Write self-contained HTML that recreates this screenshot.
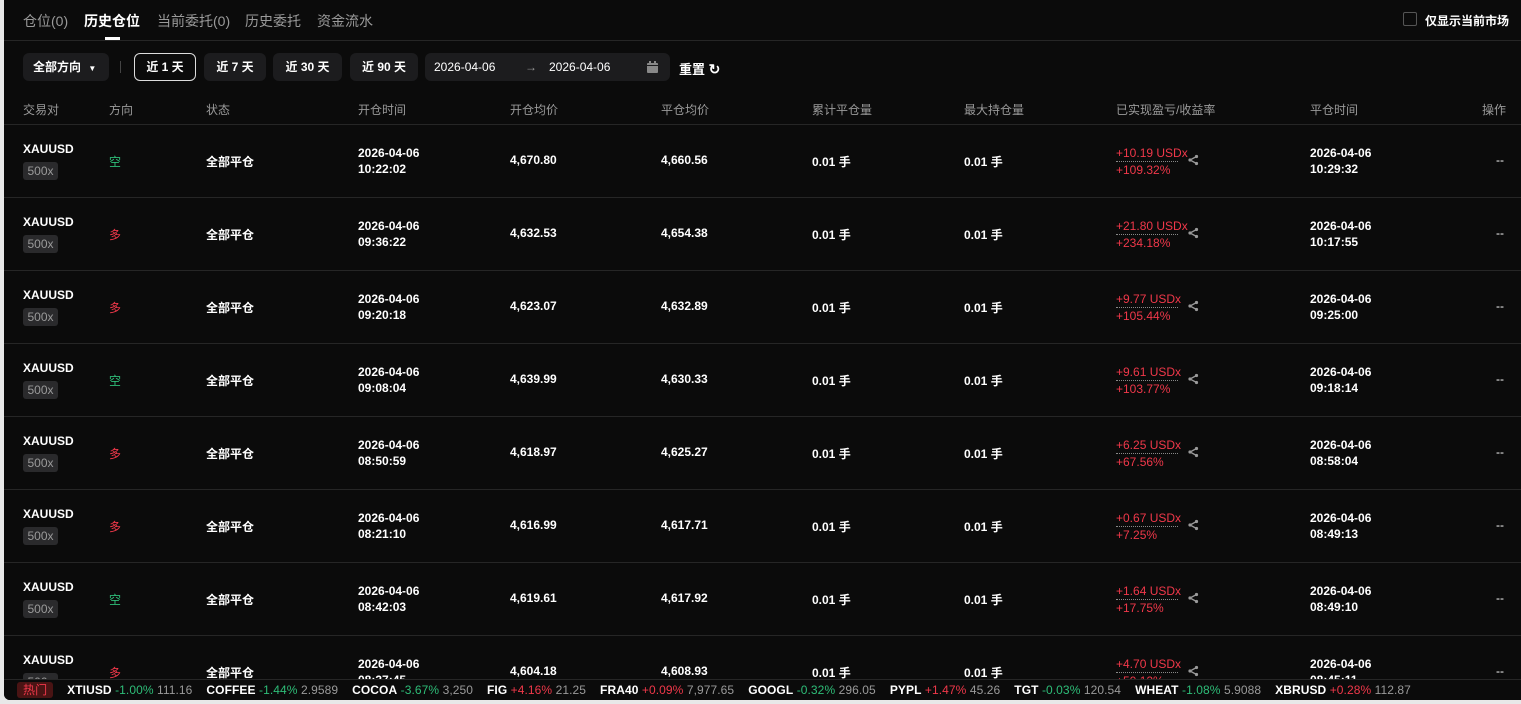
<!DOCTYPE html><html><head><meta charset="utf-8"><style>
*{margin:0;padding:0;box-sizing:border-box}
body{width:1521px;height:704px;background:#e8e8e8;font-family:"Liberation Sans","Noto Sans CJK SC",sans-serif;color:#fff;overflow:hidden;position:relative}
#app{position:absolute;left:4px;top:0;width:1517px;height:700px;background:#0b0b0b;overflow:hidden;border-bottom-left-radius:6px}
.a{position:absolute;white-space:nowrap}
.tab{top:11px;font-size:14px;color:#9a9a9a}
.btn{position:absolute;top:53px;height:28px;border-radius:6px;background:#1c1c1e;font-size:12px;font-weight:bold;line-height:28px;text-align:center;color:#fff}
.hd{top:101px;font-size:12px;color:#9a9a9a}
.row{position:absolute;left:0;width:1517px;height:73px;border-bottom:1px solid #262626}
.row .a{font-size:12px;font-weight:bold}
.sym{left:19px;top:17px}
.lev{left:19px;top:37px;width:35px;height:18px;background:#2a2a2c;border-radius:3px;color:#9a9a9a!important;font-weight:normal!important;text-align:center;line-height:18px;font-size:12px}
.dir{left:105px;top:28px;font-weight:normal!important}
.g{color:#2ebd78}.r{color:#f0384a}
.st{left:202px;top:28px}
.t1{left:354px;top:20px;line-height:16px}
.p1{left:506px;top:28px}.p2{left:657px;top:28px}
.q1{left:808px;top:28px}.q2{left:960px;top:28px}
.pl{left:1112px;top:20px;line-height:16px;color:#f0384a;font-weight:normal!important}
.pl span{display:block;border-bottom:1px dotted #888;width:62px}
.sh{left:1183px;top:29px;width:12px;height:12px}
.t2{left:1306px;top:20px;line-height:16px}
.op{left:1492px;top:28px;font-weight:normal!important}
#tk{position:absolute;left:0;top:679px;width:1517px;height:21px;background:#0b0b0b;border-top:1px solid #262626;font-size:12px;line-height:20px;letter-spacing:0.08px}
#tk b{font-weight:bold;color:#fff;margin-left:14px}
#tk i{font-style:normal}
#tk .v{color:#9a9a9a}
</style></head><body><div id="app">
<div class="a tab" style="left:19px">仓位(0)</div>
<div class="a tab" style="left:80px;color:#fff;font-weight:bold">历史仓位</div>
<div class="a" style="left:101px;top:37px;width:15px;height:3px;background:#fff"></div>
<div class="a tab" style="left:153px">当前委托(0)</div>
<div class="a tab" style="left:241px">历史委托</div>
<div class="a tab" style="left:313px">资金流水</div>
<div class="a" style="left:1399px;top:12px;width:14px;height:14px;border:1px solid #555;border-radius:2px"></div>
<div class="a" style="left:1421px;top:12px;font-size:12px;font-weight:bold">仅显示当前市场</div>
<div class="a" style="left:0;top:40px;width:1517px;height:1px;background:#262626"></div>
<div class="btn" style="left:19px;width:86px;text-align:left;padding-left:10px">全部方向 <span style="font-size:8px;margin-left:4px">▼</span></div>
<div class="a" style="left:116px;top:61px;width:1px;height:12px;background:#444"></div>
<div class="btn" style="left:130px;width:62px;background:#0b0b0b;border:1px solid #ddd;line-height:26px">近 1 天</div>
<div class="btn" style="left:200px;width:62px">近 7 天</div>
<div class="btn" style="left:269px;width:69px">近 30 天</div>
<div class="btn" style="left:346px;width:68px">近 90 天</div>
<div class="btn" style="left:421px;width:245px;text-align:left;font-weight:normal"><span style="position:absolute;left:9px">2026-04-06</span><span style="position:absolute;left:100px;color:#999">→</span><span style="position:absolute;left:124px">2026-04-06</span><svg style="position:absolute;left:222px;top:8px" width="11" height="12" viewBox="0 0 11 12"><rect x="0" y="2" width="11" height="10" rx="1" fill="#888"/><rect x="2" y="0" width="2" height="3" fill="#888"/><rect x="7" y="0" width="2" height="3" fill="#888"/><rect x="0" y="4" width="11" height="1" fill="#1c1c1e"/></svg></div>
<div class="a" style="left:675px;top:59px;font-size:13px;font-weight:bold">重置 <span style="font-size:14px">↻</span></div>
<div class="a hd" style="left:19px">交易对</div><div class="a hd" style="left:105px">方向</div><div class="a hd" style="left:202px">状态</div><div class="a hd" style="left:354px">开仓时间</div><div class="a hd" style="left:506px">开仓均价</div><div class="a hd" style="left:657px">平仓均价</div><div class="a hd" style="left:808px">累计平仓量</div><div class="a hd" style="left:960px">最大持仓量</div><div class="a hd" style="left:1112px">已实现盈亏/收益率</div><div class="a hd" style="left:1306px">平仓时间</div><div class="a hd" style="left:1478px">操作</div>
<div class="a" style="left:0;top:124px;width:1517px;height:1px;background:#262626"></div>

<svg width="0" height="0" style="position:absolute"><defs><symbol id="sh" viewBox="0 0 12 12"><path d="M9.5 2.5L3 6l6.5 3.5" stroke="#999" stroke-width="1.3" fill="none"/><circle cx="9.5" cy="2.5" r="1.6" fill="#999"/><circle cx="3" cy="6" r="1.6" fill="#999"/><circle cx="9.5" cy="9.5" r="1.6" fill="#999"/></symbol></defs></svg>

<div class="row" style="top:125px"><div class="a sym">XAUUSD</div><div class="a lev">500x</div><div class="a dir g">空</div><div class="a st">全部平仓</div><div class="a t1">2026-04-06<br>10:22:02</div><div class="a p1">4,670.80</div><div class="a p2">4,660.56</div><div class="a q1">0.01 手</div><div class="a q2">0.01 手</div><div class="a pl"><span>+10.19 USDx</span>+109.32%</div><svg class="a sh"><use href="#sh"/></svg><div class="a t2">2026-04-06<br>10:29:32</div><div class="a op">--</div></div>
<div class="row" style="top:198px"><div class="a sym">XAUUSD</div><div class="a lev">500x</div><div class="a dir r">多</div><div class="a st">全部平仓</div><div class="a t1">2026-04-06<br>09:36:22</div><div class="a p1">4,632.53</div><div class="a p2">4,654.38</div><div class="a q1">0.01 手</div><div class="a q2">0.01 手</div><div class="a pl"><span>+21.80 USDx</span>+234.18%</div><svg class="a sh"><use href="#sh"/></svg><div class="a t2">2026-04-06<br>10:17:55</div><div class="a op">--</div></div>
<div class="row" style="top:271px"><div class="a sym">XAUUSD</div><div class="a lev">500x</div><div class="a dir r">多</div><div class="a st">全部平仓</div><div class="a t1">2026-04-06<br>09:20:18</div><div class="a p1">4,623.07</div><div class="a p2">4,632.89</div><div class="a q1">0.01 手</div><div class="a q2">0.01 手</div><div class="a pl"><span>+9.77 USDx</span>+105.44%</div><svg class="a sh"><use href="#sh"/></svg><div class="a t2">2026-04-06<br>09:25:00</div><div class="a op">--</div></div>
<div class="row" style="top:344px"><div class="a sym">XAUUSD</div><div class="a lev">500x</div><div class="a dir g">空</div><div class="a st">全部平仓</div><div class="a t1">2026-04-06<br>09:08:04</div><div class="a p1">4,639.99</div><div class="a p2">4,630.33</div><div class="a q1">0.01 手</div><div class="a q2">0.01 手</div><div class="a pl"><span>+9.61 USDx</span>+103.77%</div><svg class="a sh"><use href="#sh"/></svg><div class="a t2">2026-04-06<br>09:18:14</div><div class="a op">--</div></div>
<div class="row" style="top:417px"><div class="a sym">XAUUSD</div><div class="a lev">500x</div><div class="a dir r">多</div><div class="a st">全部平仓</div><div class="a t1">2026-04-06<br>08:50:59</div><div class="a p1">4,618.97</div><div class="a p2">4,625.27</div><div class="a q1">0.01 手</div><div class="a q2">0.01 手</div><div class="a pl"><span>+6.25 USDx</span>+67.56%</div><svg class="a sh"><use href="#sh"/></svg><div class="a t2">2026-04-06<br>08:58:04</div><div class="a op">--</div></div>
<div class="row" style="top:490px"><div class="a sym">XAUUSD</div><div class="a lev">500x</div><div class="a dir r">多</div><div class="a st">全部平仓</div><div class="a t1">2026-04-06<br>08:21:10</div><div class="a p1">4,616.99</div><div class="a p2">4,617.71</div><div class="a q1">0.01 手</div><div class="a q2">0.01 手</div><div class="a pl"><span>+0.67 USDx</span>+7.25%</div><svg class="a sh"><use href="#sh"/></svg><div class="a t2">2026-04-06<br>08:49:13</div><div class="a op">--</div></div>
<div class="row" style="top:563px"><div class="a sym">XAUUSD</div><div class="a lev">500x</div><div class="a dir g">空</div><div class="a st">全部平仓</div><div class="a t1">2026-04-06<br>08:42:03</div><div class="a p1">4,619.61</div><div class="a p2">4,617.92</div><div class="a q1">0.01 手</div><div class="a q2">0.01 手</div><div class="a pl"><span>+1.64 USDx</span>+17.75%</div><svg class="a sh"><use href="#sh"/></svg><div class="a t2">2026-04-06<br>08:49:10</div><div class="a op">--</div></div>
<div class="row" style="top:636px"><div class="a sym">XAUUSD</div><div class="a lev">500x</div><div class="a dir r">多</div><div class="a st">全部平仓</div><div class="a t1">2026-04-06<br>08:37:45</div><div class="a p1">4,604.18</div><div class="a p2">4,608.93</div><div class="a q1">0.01 手</div><div class="a q2">0.01 手</div><div class="a pl"><span>+4.70 USDx</span>+50.12%</div><svg class="a sh"><use href="#sh"/></svg><div class="a t2">2026-04-06<br>08:45:11</div><div class="a op">--</div></div>

<div id="tk"><span style="display:inline-block;margin-left:13px;background:#4a1414;color:#f0384a;padding:0 6px;border-radius:3px;line-height:16px">热门</span><b>XTIUSD</b> <i class="g">-1.00%</i> <i class="v">111.16</i><b>COFFEE</b> <i class="g">-1.44%</i> <i class="v">2.9589</i><b>COCOA</b> <i class="g">-3.67%</i> <i class="v">3,250</i><b>FIG</b> <i class="r">+4.16%</i> <i class="v">21.25</i><b>FRA40</b> <i class="r">+0.09%</i> <i class="v">7,977.65</i><b>GOOGL</b> <i class="g">-0.32%</i> <i class="v">296.05</i><b>PYPL</b> <i class="r">+1.47%</i> <i class="v">45.26</i><b>TGT</b> <i class="g">-0.03%</i> <i class="v">120.54</i><b>WHEAT</b> <i class="g">-1.08%</i> <i class="v">5.9088</i><b>XBRUSD</b> <i class="r">+0.28%</i> <i class="v">112.87</i></div>
</div></body></html>
